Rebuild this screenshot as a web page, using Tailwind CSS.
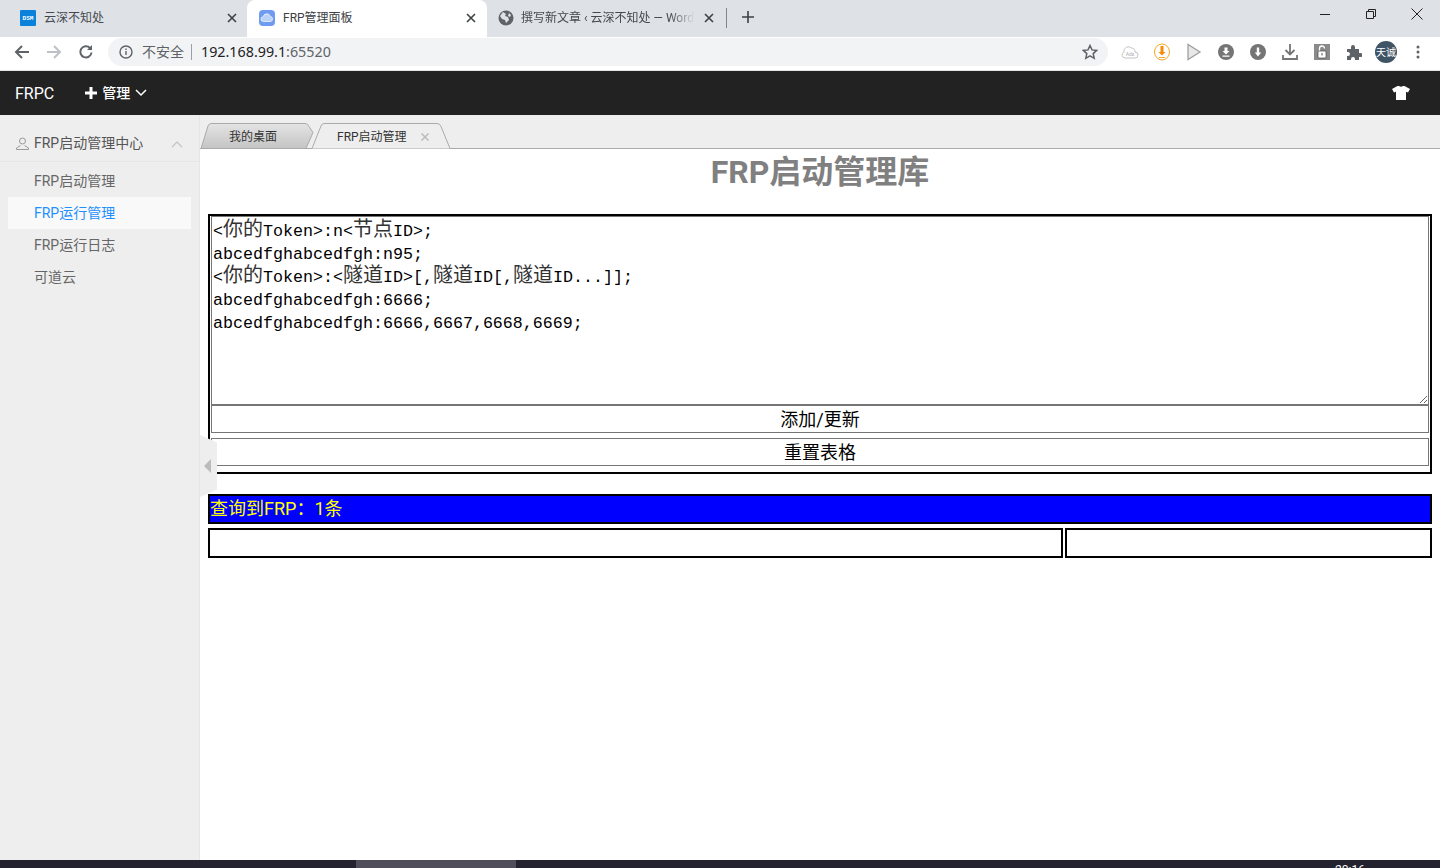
<!DOCTYPE html>
<html lang="zh-CN">
<head>
<meta charset="UTF-8" />
<title>FRP管理面板</title>
<script src="https://cdn.jsdelivr.net/npm/@tailwindcss/browser@4"></script>
</head>
<body class="h-[868px] w-[1440px] overflow-hidden bg-white flex flex-col font-['Roboto','Noto_Sans_CJK_SC',sans-serif]">

<!-- browser tab strip -->
<div class="h-[37px] bg-[#dee1e6] flex items-end text-[12px] text-[#45494e] shrink-0">
    <div class="w-[247px] h-[34px] pl-[20px] pr-[10px] pb-[4px] flex items-center">
        <div class="w-4 h-4 bg-[#0a82dc] rounded-[1px] text-white text-[6px] font-bold flex items-center justify-center font-['Liberation_Mono',monospace]">DSM</div>
        <span class="ml-2 flex-1">云深不知处</span>
        <svg class="w-[10px] h-[10px]" viewBox="0 0 10 10" stroke="#3c4043" stroke-width="1.6"><path d="M1 1l8 8M9 1l-8 8"/></svg>
    </div>
    <div class="w-[240px] h-[37px] pb-[1px] bg-white rounded-t-lg pl-[12px] pr-[11px] flex items-center text-[#3c4043]">
        <svg class="w-4 h-4" viewBox="0 0 16 16"><rect width="16" height="16" rx="4" fill="#6f9cf0"/><path d="M4.500 11.500a2.400 2.400 0 0 1-.2-4.800 3.600 3.600 0 0 1 7-.3 2.600 2.600 0 0 1 .3 5.100z" fill="#b9d2f8" stroke="#fff" stroke-width=".7"/></svg>
        <span class="ml-2 flex-1">FRP管理面板</span>
        <svg class="w-[10px] h-[10px]" viewBox="0 0 10 10" stroke="#3c4043" stroke-width="1.6"><path d="M1 1l8 8M9 1l-8 8"/></svg>
    </div>
    <div class="w-[239px] h-[34px] pl-[11px] pr-[12px] pb-[4px] flex items-center">
        <svg class="w-4 h-4 shrink-0" viewBox="0 0 16 16"><circle cx="8" cy="8" r="7.5" fill="#5f6368"/><path d="M5 2l3 2-1 2 3 1 1 3-3 3-1-3-3-1-2-3zM11 3l2 2-1 2-2-1z" fill="#dee1e6"/></svg>
        <span class="ml-[7px] w-[174px] overflow-hidden whitespace-nowrap [mask-image:linear-gradient(to_right,black_85%,transparent)]">撰写新文章 ‹ 云深不知处 — WordPress</span>
        <svg class="ml-auto w-[10px] h-[10px]" viewBox="0 0 10 10" stroke="#3c4043" stroke-width="1.6"><path d="M1 1l8 8M9 1l-8 8"/></svg>
    </div>
    <div class="w-px h-[20px] mb-[9px] bg-[#80868b]"></div>
    <svg class="ml-[15px] mb-[14px] w-[12px] h-[12px]" viewBox="0 0 12 12" stroke="#3c4043" stroke-width="1.6"><path d="M6 0v12M0 6h12"/></svg>
    <div class="ml-auto self-start flex items-center pr-[17px] pt-[8px] gap-[34px]">
        <svg class="w-[12px] h-[12px]" viewBox="0 0 12 12" stroke="#222" fill="none"><path d="M1 6.500h10"/></svg>
        <svg class="w-[12px] h-[12px]" viewBox="0 0 12 12" stroke="#222" fill="none"><path d="M1.500 3.500h7v7h-7zM3.500 3.500v-2h7v7h-2"/></svg>
        <svg class="w-[12px] h-[12px]" viewBox="0 0 12 12" stroke="#222" fill="none"><path d="M.5.5l11 11M11.500 .5l-11 11"/></svg>
    </div>
</div>

<!-- browser toolbar -->
<div class="h-[34px] bg-white border-b border-[#e4e4e4] flex items-center pb-[3px] shrink-0">
    <div class="w-[108px] pl-[14px] flex items-center gap-[16px]">
        <svg class="w-4 h-4" viewBox="0 0 16 16" fill="none" stroke="#5f6368" stroke-width="2"><path d="M15 8H2M8 2L2 8l6 6"/></svg>
        <svg class="w-4 h-4" viewBox="0 0 16 16" fill="none" stroke="#bdc1c6" stroke-width="2"><path d="M1 8h13M8 2l6 6-6 6"/></svg>
        <svg class="w-4 h-4" viewBox="0 0 16 16" fill="none" stroke="#5f6368" stroke-width="2"><path d="M13.500 8.500A5.600 5.600 0 1 1 12 4"/><path d="M14 1v5H9" fill="#5f6368" stroke="none"/></svg>
    </div>
    <div class="w-[1000px] h-[28px] bg-[#f1f3f4] rounded-full flex items-center pl-[11px] pr-[10px]">
        <svg class="w-[14px] h-[14px]" viewBox="0 0 14 14" fill="none" stroke="#5f6368" stroke-width="1.400"><circle cx="7" cy="7" r="6"/><path d="M7 6v4M7 3.500v1.400"/></svg>
        <span class="ml-[9px] text-[14px] text-[#5f6368]">不安全</span>
        <div class="ml-[7px] w-px h-[16px] bg-[#9aa0a6]"></div>
        <span class="ml-[9px] mb-px text-[14.300px] text-[#202124] font-['Noto_Sans',sans-serif]">192.168.99.1<span class="text-[#5f6368]">:65520</span></span>
        <svg class="ml-auto w-4 h-4" viewBox="0 0 16 16" fill="none" stroke="#5f6368" stroke-width="1.500"><path d="M8 1.500l2 4.400 4.700.5-3.500 3.200 1 4.700L8 11.900l-4.200 2.400 1-4.700L1.300 6.400 6 5.900z"/></svg>
    </div>
    <!-- extension icons, one 32px cell each -->
    <div class="ml-[6px] w-[320px] grid grid-cols-10 justify-items-center items-center">
        <svg class="w-[18px] h-[14px]" viewBox="0 0 18 14" fill="#fff" stroke="#c4c4c4"><path d="M4 13a3 3 0 0 1-1-5.800A4.500 4.500 0 0 1 10.500 3 3.500 3.500 0 0 1 14 7a3 3 0 0 1 0 6z"/><text x="9" y="11" font-size="5" text-anchor="middle" fill="#aaa" stroke="none">Ads</text></svg>
        <svg class="w-[16px] h-[18px]" viewBox="0 0 16 18"><ellipse cx="8" cy="9" rx="7.500" ry="8" fill="#fff" stroke="#f5a623"/><path d="M6.500 3h3v6h2L8 12.500 4.500 9h2z" fill="#f58c0a"/><path d="M5 14.500h6" stroke="#f5a623"/></svg>
        <svg class="w-4 h-[18px]" viewBox="0 0 16 18" fill="#e8e8e8" stroke="#a0a0a0" stroke-width="1.300"><path d="M2 1.500v15L14 9z"/></svg>
        <svg class="w-4 h-4" viewBox="0 0 16 16"><circle cx="8" cy="8" r="8" fill="#757575"/><path d="M6.500 3.500h3v3.500h2L8 10.500 4.500 7h2zM4.500 11.500h7v1.200h-7z" fill="#fff"/></svg>
        <svg class="w-4 h-4" viewBox="0 0 16 16"><circle cx="8" cy="8" r="8" fill="#757575"/><path d="M6.800 3.500h2.400v5h2L8 12.500 4.800 8.500h2z" fill="#fff"/></svg>
        <svg class="w-4 h-4" viewBox="0 0 16 16" fill="none" stroke="#757575" stroke-width="1.800"><path d="M8 0v10M3.500 6L8 10.500 12.500 6M1 11v4h14v-4"/></svg>
        <svg class="w-4 h-4" viewBox="0 0 16 16"><rect width="16" height="16" fill="#8a8a8a"/><path d="M5.500 7V4.500a2.500 2.500 0 0 1 5 0" fill="none" stroke="#fff" stroke-width="1.300"/><rect x="4" y="7" width="8" height="7" rx="1" fill="#fff" stroke="#333" stroke-width=".6"/><path d="M8 9v2.500" stroke="#555"/></svg>
        <svg class="w-4 h-4" viewBox="0 0 16 16" fill="#5f6368"><path d="M1 5h4V3a2 2 0 0 1 4 0v2h4v4h1.500a2 2 0 0 1 0 4H13v3H9v-1a2 2 0 0 0-4 0v1H1v-4h1a2 2 0 0 0 0-4H1z"/></svg>
        <div class="w-[22px] h-[22px] rounded-full bg-[#3f5566] text-white text-[10px] flex items-center justify-center">天诚</div>
        <svg class="w-1 h-[14px]" viewBox="0 0 4 14" fill="#5f6368"><circle cx="2" cy="2" r="1.500"/><circle cx="2" cy="7" r="1.500"/><circle cx="2" cy="12" r="1.500"/></svg>
    </div>
</div>

<!-- app header -->
<header class="h-[44px] bg-[#222] text-white flex items-center shrink-0">
    <span class="ml-[15px] mt-px text-[16px]">FRPC</span>
    <svg class="ml-[31px] w-[12px] h-[12px]" viewBox="0 0 12 12" stroke="#fff" stroke-width="3"><path d="M6 0v12M0 6h12"/></svg>
    <span class="ml-[5px] text-[14px] font-medium">管理</span>
    <svg class="ml-[5px] w-[12px] h-[8px]" viewBox="0 0 12 8" fill="none" stroke="#fff" stroke-width="1.500"><path d="M1 1l5 5 5-5"/></svg>
    <svg class="ml-auto mr-[30px] w-[18px] h-[14px]" viewBox="0 0 18 14" fill="#fff"><path d="M5.500 0H7q2 1.500 4 0h1.500L18 3l-2 3.500-2-.8V14H4V5.700l-2 .8L0 3z"/></svg>
</header>

<div class="flex-1 flex min-h-0">
    <!-- sidebar -->
    <aside class="w-[200px] shrink-0 bg-[#eee] border-r border-[#e6e6e6] text-[14px] text-[#666]">
        <div class="h-[47px] pt-[11px] border-b border-[#e6e6e6] flex items-center pl-[16px] pr-[16px]">
            <svg class="w-[13px] h-[13px]" viewBox="0 0 13 13" fill="none" stroke="#999"><circle cx="6.500" cy="4" r="3"/><path d="M.5 12.500v-1.500l4-2.500M12.500 12.500v-1.500l-4-2.500M.5 12.500h12"/></svg>
            <span class="ml-[5px] text-[#555]">FRP启动管理中心</span>
            <svg class="ml-auto w-[12px] h-[8px]" viewBox="0 0 12 8" fill="none" stroke="#c2c2c2" stroke-width="1.200"><path d="M1 7l5-5 5 5"/></svg>
        </div>
        <nav class="mt-[3px] px-[8px]">
            <div class="h-[32px] pl-[26px] flex items-center">FRP启动管理</div>
            <div class="h-[32px] pl-[26px] flex items-center bg-[#f9f9f9] text-[#1e90ff] w-[183px]">FRP运行管理</div>
            <div class="h-[32px] pl-[26px] flex items-center">FRP运行日志</div>
            <div class="h-[32px] pl-[26px] flex items-center">可道云</div>
        </nav>
    </aside>

    <main class="flex-1 min-w-0 relative">
        <!-- collapse handle -->
        <div class="absolute left-0 top-[320px] w-[17px] h-[62px] bg-[#eee] [clip-path:polygon(0_0,100%_12%,100%_88%,0_100%)] flex items-center justify-center pr-[2px]">
            <div class="w-0 h-0 border-y-[7px] border-y-transparent border-r-[7px] border-r-[#bbb]"></div>
        </div>

        <!-- page tabs -->
        <div class="h-[34px] pt-[8px] bg-[#eee] border-b border-[#aaa] flex text-[12px] text-[#333] box-border">
            <div class="relative w-[114px] h-[26px] ml-[1px] flex items-center justify-center pr-[10px]">
                <svg class="absolute inset-0 w-full h-full" viewBox="0 0 114 26" preserveAspectRatio="none"><defs><linearGradient id="tabGrey" x1="0" y1="0" x2="0" y2="1"><stop offset="0" stop-color="#e4e4e4"/><stop offset="1" stop-color="#c4c4c4"/></linearGradient></defs><path d="M0 25.500L7 3q1-2.500 3-2.500h94q3 0 4 3l4 6-7 16z" fill="url(#tabGrey)" stroke="#aaa"/></svg>
                <span class="relative mt-[2px]">我的桌面</span>
            </div>
            <div class="relative w-[139px] h-[26px] -ml-[3px] flex items-center pl-[25px]">
                <svg class="absolute inset-0 w-full h-full" viewBox="0 0 139 26" preserveAspectRatio="none"><path d="M0 25.500L9 3q1-2.500 3-2.500h113q3 0 4 3l9 22" fill="#eee" stroke="#aaa"/></svg>
                <span class="relative mt-[2px]">FRP启动管理</span>
                <svg class="relative ml-[14px] mt-[2px] w-[8px] h-[8px]" viewBox="0 0 8 8" stroke="#bbb" stroke-width="1.500"><path d="M.5.5l7 7M7.500 .5l-7 7"/></svg>
            </div>
        </div>

        <h1 class="mt-[3px] h-[40px] text-center text-[32px] leading-[40px] font-bold text-[#808080]">FRP启动管理库</h1>

        <div class="mt-[22px] ml-[8px] w-[1224px] text-black">
            <!-- form table -->
            <div class="h-[260px] border-2 border-black pl-px pr-px flex flex-col">
                <div class="h-[190px] border-2 border-[#767676] border-t-[1px] border-x-[1px] resize overflow-auto whitespace-pre font-['Liberation_Mono','Noto_Sans_CJK_SC',monospace] text-[16.67px] leading-[23px] pl-[1px] pt-[3px]">&lt;<span class="text-[20px] leading-none text-[#333]">你的</span>Token&gt;:n&lt;<span class="text-[20px] leading-none text-[#333]">节点</span>ID&gt;;
abcedfghabcedfgh:n95;
&lt;<span class="text-[20px] leading-none text-[#333]">你的</span>Token&gt;:&lt;<span class="text-[20px] leading-none text-[#333]">隧道</span>ID&gt;[,<span class="text-[20px] leading-none text-[#333]">隧道</span>ID[,<span class="text-[20px] leading-none text-[#333]">隧道</span>ID...]];
abcedfghabcedfgh:6666;
abcedfghabcedfgh:6666,6667,6668,6669;</div>
                <button class="h-[27px] border border-[#767676] border-t-0 bg-white text-[18px]">添加/更新</button>
                <button class="mt-[5px] h-[28px] border border-[#767676] bg-white text-[18px]">重置表格</button>
            </div>

            <div class="mt-[20px] h-[30px] border-2 border-black bg-[#00f] text-[#ff0] text-[18px] leading-[26px]">查询到FRP：1条</div>

            <div class="mt-[4px] flex gap-[2px]">
                <div class="w-[855px] h-[30px] border-2 border-black"></div>
                <div class="flex-1 h-[30px] border-2 border-black"></div>
            </div>
        </div>
    </main>
</div>

<!-- taskbar, cut off by the window -->
<footer class="h-[8px] bg-[#24222e] flex overflow-hidden shrink-0">
    <div class="ml-[356px] w-[160px] bg-[#504e5a]"></div>
    <span class="ml-[819px] mt-[4px] text-white text-[12px] leading-[12px]">20:16</span>
</footer>
</body>
</html>
